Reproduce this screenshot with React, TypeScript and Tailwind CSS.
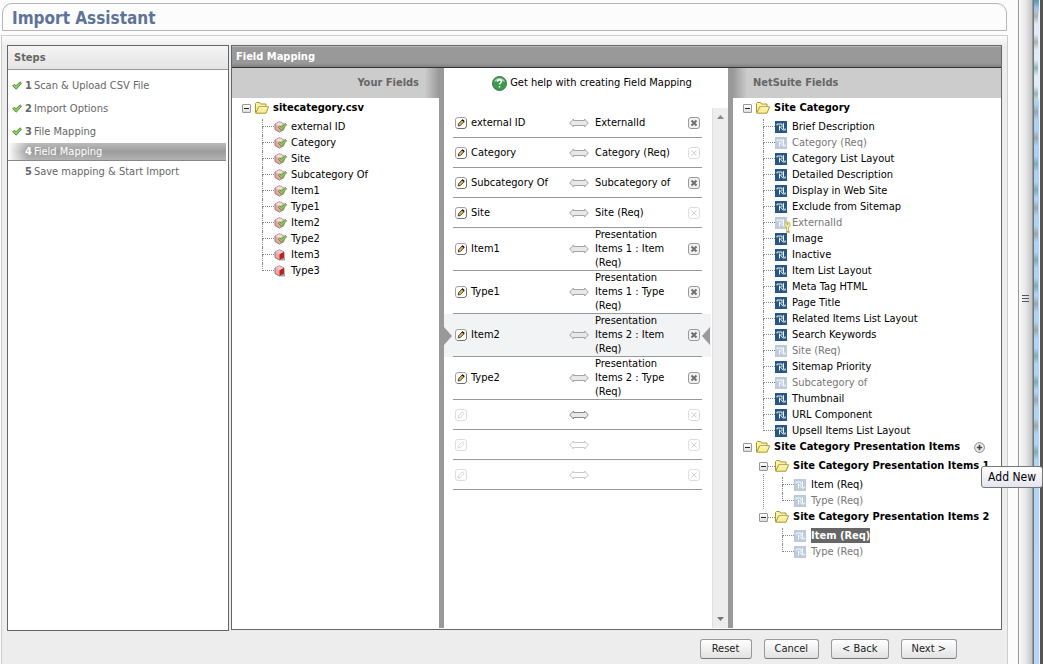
import type { ReactNode } from "react";

const steps = [
  { label: "Scan & Upload CSV File", state: "done" },
  { label: "Import Options", state: "done" },
  { label: "File Mapping", state: "done" },
  { label: "Field Mapping", state: "current" },
  { label: "Save mapping & Start Import", state: "todo" },
];

const yourFields = [
  { label: "external ID", mapped: true },
  { label: "Category", mapped: true },
  { label: "Site", mapped: true },
  { label: "Subcategory Of", mapped: true },
  { label: "Item1", mapped: true },
  { label: "Type1", mapped: true },
  { label: "Item2", mapped: true },
  { label: "Type2", mapped: true },
  { label: "Item3", mapped: false },
  { label: "Type3", mapped: false },
];

type Mapping = { from: string; to: string; locked?: boolean; active?: boolean };

const mappings: Mapping[] = [
  { from: "external ID", to: "ExternalId" },
  { from: "Category", to: "Category (Req)", locked: true },
  { from: "Subcategory Of", to: "Subcategory of" },
  { from: "Site", to: "Site (Req)", locked: true },
  { from: "Item1", to: "Presentation Items 1 : Item (Req)" },
  { from: "Type1", to: "Presentation Items 1 : Type (Req)" },
  { from: "Item2", to: "Presentation Items 2 : Item (Req)", active: true },
  { from: "Type2", to: "Presentation Items 2 : Type (Req)" },
];

const siteCategory = [
  "Brief Description",
  "Category (Req)",
  "Category List Layout",
  "Detailed Description",
  "Display in Web Site",
  "Exclude from Sitemap",
  "ExternalId",
  "Image",
  "Inactive",
  "Item List Layout",
  "Meta Tag HTML",
  "Page Title",
  "Related Items List Layout",
  "Search Keywords",
  "Site (Req)",
  "Sitemap Priority",
  "Subcategory of",
  "Thumbnail",
  "URL Component",
  "Upsell Items List Layout",
];
const usedFields = ["Category (Req)", "ExternalId", "Site (Req)", "Subcategory of"];

function CheckIcon() {
  return (
    <svg width="10" height="9" viewBox="0 0 10 9" className="shrink-0">
      <path d="M.6 4.9 2.3 3.2 4 4.8 8 .8 9.5 2.2 4.3 8.2Z" fill="#8fcf62" stroke="#3f7a2a" strokeWidth=".8" />
    </svg>
  );
}

function FolderIcon() {
  return (
    <svg width="14" height="12" viewBox="0 0 14 12" className="shrink-0">
      <path d="M.5 10.5v-9l1-1h3l1 1.5h5.5V5" fill="#fbf3a8" stroke="#a8962a" />
      <path d="M.7 11.2 3.6 4.8h10L11 11.2Z" fill="#f8ee9c" stroke="#a8962a" />
      <path d="M4.3 5.8h8" stroke="#fffce0" />
    </svg>
  );
}

function CubeIcon({ mapped }: { mapped: boolean }) {
  return (
    <svg width="13" height="12" viewBox="0 0 13 12" className="shrink-0">
      {!mapped && <path d="M6 11.5 11 8v3.5Z" fill="#a5a5a5" />}
      <path d="M5.5 .8 10 3v5.5L5.5 11 1 8.5V3Z" fill="#e9a9a9" stroke="#8d6a6a" strokeWidth=".9" />
      <path d="M5.5 .9 9.8 3 5.5 5.2 1.2 3Z" fill={mapped ? "#f4dada" : "#f3c9c9"} />
      <path d="M5.5 5.2 10 3v5.5L5.5 11Z" fill={mapped ? "#e3a5a5" : "#c1201c"} />
      {mapped && <path d="M4.3 6.2 5.8 4.9 7.4 6.4 11.2 2.4 12.6 3.7 7.5 9.6Z" fill="#8fcf62" stroke="#3f7a2a" strokeWidth=".7" />}
    </svg>
  );
}

function FieldIcon({ dim, withKey }: { dim?: boolean; withKey?: boolean }) {
  return (
    <svg width="12" height="12" viewBox="0 0 12 12" className="shrink-0 overflow-visible">
      <rect width="12" height="12" fill={dim ? "#bccbda" : "#275883"} />
      <path d="M2 4.5V3h5v3.2M4.5 4.5v5M5 5.5 8 9h2.2V7.5M8.5 2.2v6" fill="none" stroke="#fff" strokeWidth=".9" />
      {withKey && (
        <g>
          <path d="M12.5 9v5.5h2" fill="none" stroke="#b5a94a" strokeWidth="2.4" />
          <circle cx="12.5" cy="7.6" r="2.8" fill="#f4ee9e" stroke="#b5a94a" strokeWidth=".7" />
          <path d="M12.5 9v5" stroke="#f4ee9e" strokeWidth="1.2" />
          <circle cx="12.5" cy="6.9" r=".8" fill="#9a8f3c" />
        </g>
      )}
    </svg>
  );
}

function EditIcon({ dim }: { dim?: boolean }) {
  return (
    <svg width="12" height="12" viewBox="0 0 12 12" className="block">
      <rect x=".5" y=".5" width="11" height="11" rx="2.5" fill="#fff" stroke={dim ? "#ddd" : "#a0a0a0"} />
      {!dim && <path d="M2.5 11.5h7l2-2v-7" fill="none" stroke="#666" strokeWidth=".8" />}
      <path d="M3.2 9 3.5 6.8 7.2 2.8 9.2 4.5 5.4 8.5Z" fill={dim ? "#fff" : "#e0b050"} stroke={dim ? "#ccc" : "#2d2418"} strokeWidth=".8" />
      {!dim && <path d="M7.2 2.8 9.2 4.5" stroke="#111" strokeWidth="1.4" />}
    </svg>
  );
}

function RemoveIcon({ dim }: { dim?: boolean }) {
  return (
    <svg width="12" height="12" viewBox="0 0 12 12" className="block">
      <rect x=".5" y=".5" width="11" height="11" rx="2.5" fill={dim ? "#fff" : "#f2f2f2"} stroke={dim ? "#ddd" : "#999"} />
      <path d="M3.5 3.5l5 5M8.5 3.5l-5 5" stroke={dim ? "#ccc" : "#707070"} strokeWidth={dim ? 0.9 : 2} />
    </svg>
  );
}

function ArrowIcon({ tone }: { tone: "normal" | "next" | "empty" }) {
  const stroke = tone === "next" ? "#888" : tone === "empty" ? "#c8c8c8" : "#a4a4a4";
  return (
    <svg width="20" height="10" viewBox="0 0 20 10" className="block">
      <path d="M.7 5 4.5 1v1.5h11V1L19.3 5 15.5 9V7.5h-11V9Z" fill={tone === "empty" ? "#fff" : "#e8e8e8"} stroke={stroke} />
    </svg>
  );
}

function Toggle() {
  return (
    <button aria-label="Collapse" className="size-[9px] shrink-0 rounded-[1px] border border-[#999] bg-linear-to-b from-white to-[#ddd]">
      <span className="mx-auto block h-px w-[5px] bg-[#222]" />
    </button>
  );
}

function Folder({ label, nested, children }: { label: string; nested?: boolean; children?: ReactNode }) {
  return (
    <div className="flex h-4 items-center whitespace-nowrap font-bold">
      <Toggle />
      {nested ? <span className="w-[7px] border-t border-dotted border-[#888]" /> : <span className="w-1" />}
      <FolderIcon />
      <span className="ml-1">{label}</span>
      {children}
    </div>
  );
}

function Leaf({ icon, last, children }: { icon: ReactNode; last?: boolean; children: ReactNode }) {
  return (
    <li className="flex h-4 items-center whitespace-nowrap">
      <span className="flex w-3 flex-col self-stretch">
        <span className="h-2 border-b border-l border-dotted border-[#888]" />
        {!last && <span className="h-2 border-l border-dotted border-[#888]" />}
      </span>
      <span className="w-[13px]">{icon}</span>
      <span className="ml-1">{children}</span>
    </li>
  );
}

function PresentationGroup({ n, last, active }: { n: number; last?: boolean; active?: boolean }) {
  return (
    <li>
      <Folder nested label={`Site Category Presentation Items ${n}`} />
      <div className={last ? "ml-1 border-l border-transparent pt-[3px] pl-[18px]" : "ml-1 border-l border-dotted border-[#888] pt-[3px] pl-[18px]"}>
        <ul>
          <Leaf icon={<FieldIcon dim />}>
            <span className={active ? "bg-[#666] py-px font-bold text-white" : ""}>Item (Req)</span>
          </Leaf>
          <Leaf icon={<FieldIcon dim />} last>
            <span className="text-[#777]">Type (Req)</span>
          </Leaf>
        </ul>
      </div>
    </li>
  );
}

function MappingRow({ from, to, locked, active, tone = "normal" }: Partial<Mapping> & { tone?: "normal" | "next" | "empty" }) {
  const blank = tone !== "normal";
  const line = "border-b border-[#999] p-0";
  return (
    <tr className={active ? "h-[30px] bg-[#f2f3f5]" : "h-[30px]"}>
      <td className="p-0">{active && <svg width="8" height="18" className="block"><path d="M0 0 8 9 0 18Z" fill="#999" /></svg>}</td>
      <td className={line}>
        <button aria-label="Edit" disabled={blank} className="ml-0.5 block"><EditIcon dim={blank} /></button>
      </td>
      <td className={line}>{from}</td>
      <td className={line}><ArrowIcon tone={tone} /></td>
      <td className={line}><div className="pr-3">{to}</div></td>
      <td className={line}>
        <button aria-label="Remove" disabled={blank || locked} className="block"><RemoveIcon dim={blank || locked} /></button>
      </td>
      <td className="p-0">{active && <svg width="8" height="18" className="block"><path d="M8 0 0 9 8 18Z" fill="#999" /></svg>}</td>
    </tr>
  );
}

function FormButton({ children }: { children: ReactNode }) {
  return (
    <button className="h-5 min-w-[52px] rounded-[3px] border border-[#999] border-b-[#777] bg-linear-to-b from-white to-[#e2e2e2] px-[10px] leading-4 text-[#222]">
      {children}
    </button>
  );
}

export default function App() {
  return (
    <div className="flex min-h-screen bg-[#fcfcfc] font-['DejaVu_Sans_Condensed','DejaVu_Sans',sans-serif] text-[11px] leading-[14px] text-black">
      <div className="flex min-w-0 flex-1 flex-col pr-[10px]">
        <header className="mt-[3px] mr-px ml-[2px] h-7 rounded-t-[10px] border border-[#b5b5b5] px-[9px]">
          <h1 className="text-[17px] leading-7 font-bold text-[#5d7399]">Import Assistant</h1>
        </header>

        <main className="mt-1 ml-px flex flex-1 flex-col border border-b-0 border-[#ccc] bg-[#ededed] bg-[linear-gradient(to_bottom,#fcfcfc,#ededed_10px)] pt-[9px] pr-[5px] pl-[5px]">
          <div className="flex flex-1 gap-0.5">
            <aside className="w-[222px] shrink-0 border border-[#666] bg-white text-[#666]">
              <h2 className="h-6 border-b border-[#999] bg-linear-to-b from-[#f4f4f4] to-[#e4e4e4] px-[6px] leading-[23px] font-bold">Steps</h2>
              <ol className="pt-1 pr-0.5">
                {steps.map((step, i) => (
                  <li
                    key={step.label}
                    className={
                      step.state === "current"
                        ? "flex h-[18px] items-center border-b border-[#888] bg-[linear-gradient(to_right,white,transparent_20px),linear-gradient(to_bottom,#bbb,#9c9c9c_50%,#b4b4b4)] pl-[17px] text-white"
                        : step.state === "done"
                          ? "flex h-[23px] items-center pl-1"
                          : "flex h-[22px] items-center pl-[17px]"
                    }
                  >
                    {step.state === "done" && <span className="w-[13px]"><CheckIcon /></span>}
                    <b className="mr-0.5">{i + 1}</b>
                    {step.label}
                  </li>
                ))}
              </ol>
            </aside>

            <section className="mb-px flex min-w-0 flex-1 flex-col border border-[#666] bg-white">
              <h2 className="h-[22px] border-t border-b border-t-[#bbb] border-b-[#333] bg-[linear-gradient(to_bottom,#999_80%,#808080)] px-1 leading-5 font-bold text-white">
                Field Mapping
              </h2>
              <div className="flex flex-1">
                <div className="min-w-0 flex-1">
                  <h3 className="h-[30px] bg-[linear-gradient(to_left,#999,#ccc_14px)] pr-5 text-right leading-[30px] font-bold text-[#666]">Your Fields</h3>
                  <div className="pt-0.5 pl-[10px]">
                    <Folder label="sitecategory.csv" />
                    <ul className="mt-[3px] ml-5">
                      {yourFields.map((f, i) => (
                        <Leaf key={f.label} icon={<CubeIcon mapped={f.mapped} />} last={i === yourFields.length - 1}>{f.label}</Leaf>
                      ))}
                    </ul>
                  </div>
                </div>

                <div className="mb-px flex w-[294px] shrink-0 flex-col border-x-[5px] border-[#999]">
                  <a href="#help" className="flex h-10 items-start justify-center gap-[3px] pt-2 pl-3">
                    <svg width="15" height="15" viewBox="0 0 15 15">
                      <circle cx="7.5" cy="7.5" r="7" fill="#3d9a50" stroke="#4a6b50" />
                      <path d="M2 6a5.8 5.8 0 0 1 11 0Q7 3 2 6Z" fill="#a5d6a7" />
                      <path d="M5.6 5.8c0-2.6 3.9-2.5 3.9-.2 0 1.4-2 1.4-2 3M7.5 10v1.5" fill="none" stroke="#fff" strokeWidth="1.5" />
                    </svg>
                    Get help with creating Field Mapping
                  </a>
                  <div className="flex flex-1 items-stretch justify-between">
                    <div className="w-[267px]">
                      <table className="w-full table-fixed border-separate border-spacing-0 text-left">
                        <colgroup>
                          <col className="w-[9px]" />
                          <col className="w-[18px]" />
                          <col className="w-[98px]" />
                          <col className="w-[26px]" />
                          <col className="w-[93px]" />
                          <col className="w-[14px]" />
                          <col className="w-[9px]" />
                        </colgroup>
                        <tbody>
                          {mappings.map((m) => <MappingRow key={m.from} {...m} />)}
                          <MappingRow tone="next" />
                          <MappingRow tone="empty" />
                          <MappingRow tone="empty" />
                        </tbody>
                      </table>
                    </div>
                    <div className="flex w-4 flex-col items-center justify-between border-l border-[#e0e0e0] bg-[#ededed] py-[7px]">
                      <svg width="7" height="4"><path d="M0 4 3.5 0 7 4Z" fill="#888" /></svg>
                      <svg width="7" height="4"><path d="M0 0h7L3.5 4Z" fill="#777" /></svg>
                    </div>
                  </div>
                </div>

                <div className="w-[268px] shrink-0">
                  <h3 className="h-[30px] bg-[linear-gradient(to_right,#999,#ccc_14px)] pl-5 leading-[30px] font-bold text-[#666]">NetSuite Fields</h3>
                  <div className="pt-0.5 pl-[10px]">
                    <Folder label="Site Category" />
                    <ul className="mt-[3px] ml-5">
                      {siteCategory.map((label, i) => {
                        const used = usedFields.includes(label);
                        return (
                          <Leaf key={label} icon={<FieldIcon dim={used} withKey={label === "ExternalId"} />} last={i === siteCategory.length - 1}>
                            <span className={used ? "text-[#777]" : ""}>{label}</span>
                          </Leaf>
                        );
                      })}
                    </ul>
                    <Folder label="Site Category Presentation Items">
                      <span className="relative ml-[14px]">
                        <button aria-label="Add New" className="block">
                          <svg width="11" height="11" viewBox="0 0 11 11">
                            <circle cx="5.5" cy="5.5" r="4.9" fill="#eee" stroke="#888" />
                            <path d="M5.5 2.8v5.4M2.8 5.5h5.4" stroke="#444" strokeWidth="1.6" />
                          </svg>
                        </button>
                        <span role="tooltip" className="absolute top-6 left-[7px] z-10 rounded-[3px] border border-[#767676] bg-linear-to-b from-white to-[#e4e5f0] px-[6px] text-[12px] leading-5 font-normal">
                          Add New
                        </span>
                      </span>
                    </Folder>
                    <ul className="mt-[3px] ml-4">
                      <PresentationGroup n={1} />
                      <PresentationGroup n={2} active last />
                    </ul>
                  </div>
                </div>
              </div>
            </section>
          </div>

          <footer className="flex h-[33px] justify-end gap-3 pt-2 pr-[45px]">
            <FormButton>Reset</FormButton>
            <FormButton>Cancel</FormButton>
            <FormButton>&lt; Back</FormButton>
            <FormButton>Next &gt;</FormButton>
          </footer>
        </main>
      </div>

      <div className="flex w-[15px] shrink-0 items-center justify-center border-x border-[#999] bg-linear-to-r from-[#fafafa] via-[#e8e8e8] to-[#c4c4c8]">
        <div className="mb-[68px] flex flex-col gap-0.5">
          <span className="h-px w-[7px] bg-[#555]" />
          <span className="h-px w-[7px] bg-[#555]" />
          <span className="h-px w-[7px] bg-[#555]" />
        </div>
      </div>
      {/* sliver of desktop wallpaper behind the window edge */}
      <div className="w-[7px] shrink-0 border-x border-l-[#777] border-r-[#eef] bg-[linear-gradient(to_bottom,#5a9ad0,#dcebf5_16px,#e0eef5_98px,#a9d2f8_102px,#b4d6f8)]">
        <div className="h-[468px] w-[4px] bg-[repeating-linear-gradient(to_bottom,transparent_8px,#8c8c7c_16px,transparent_24px,transparent_34px,#8c8c7c_42px,transparent_50px,transparent_60px,#5c9480_68px,transparent_76px,transparent_86px,#5c9480_94px,transparent_102px,transparent_104px)] opacity-60" />
      </div>
      <div className="w-[3px] shrink-0 bg-[#555]" />
    </div>
  );
}
